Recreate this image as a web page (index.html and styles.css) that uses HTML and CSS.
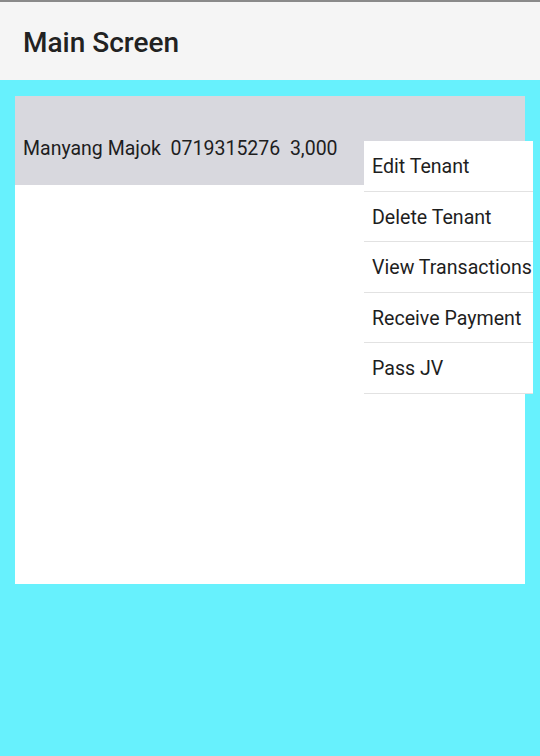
FILE: index.html
```html
<!DOCTYPE html>
<html>
<head>
<meta charset="utf-8">
<link rel="stylesheet" href="styles.css">
</head>
<body>
<div class="screen">
  <header class="toolbar"><h1 class="title">Main Screen</h1></header>
  <main class="content">
    <section class="panel">
      <div class="row">Manyang Majok&nbsp; 0719315276&nbsp; 3,000</div>
    </section>
    <ul class="menu">
      <li class="menu-item">Edit Tenant</li>
      <li class="menu-item">Delete Tenant</li>
      <li class="menu-item">View Transactions</li>
      <li class="menu-item">Receive Payment</li>
      <li class="menu-item">Pass JV</li>
    </ul>
  </main>
</div>
</body>
</html>
```

FILE: styles.css
```css
html, body {
  margin: 0;
  padding: 0;
}
body {
  width: 540px;
  height: 756px;
  overflow: hidden;
  font-family: Roboto, "Noto Sans", sans-serif;
  color: #1c1c1c;
  background: #67f1fd;
}
.screen {
  display: flex;
  flex-direction: column;
  height: 756px;
}
.toolbar {
  height: 78px;
  background: #f5f5f5;
  border-top: 2px solid #8a8a8a;
  display: flex;
  align-items: center;
  padding-left: 23px;
}
.title {
  margin: 0;
  font-size: 28px;
  font-weight: 500;
  color: #222222;
  letter-spacing: 0;
  padding-top: 3px;
}
.content {
  position: relative;
  flex: 1;
  background: #67f1fd;
  padding: 16px 15px 0;
}
.panel {
  width: 510px;
  height: 488px;
  background: #ffffff;
}
.row {
  height: 89px;
  box-sizing: border-box;
  background: #d8d8de;
  padding: 41px 0 0 8px;
  font-size: 19.5px;
  line-height: 24px;
  color: #1e1e1e;
}
.menu {
  position: absolute;
  left: 364px;
  top: 61px;
  width: 169px;
  margin: 0;
  padding: 0;
  list-style: none;
  background: #ffffff;
}
.menu-item {
  height: 50.5px;
  box-sizing: border-box;
  border-bottom: 1px solid #e2e2e2;
  padding: 14px 0 0 8px;
  font-size: 19.6px;
  line-height: 24px;
  color: #1e1e1e;
  white-space: nowrap;
}
```
